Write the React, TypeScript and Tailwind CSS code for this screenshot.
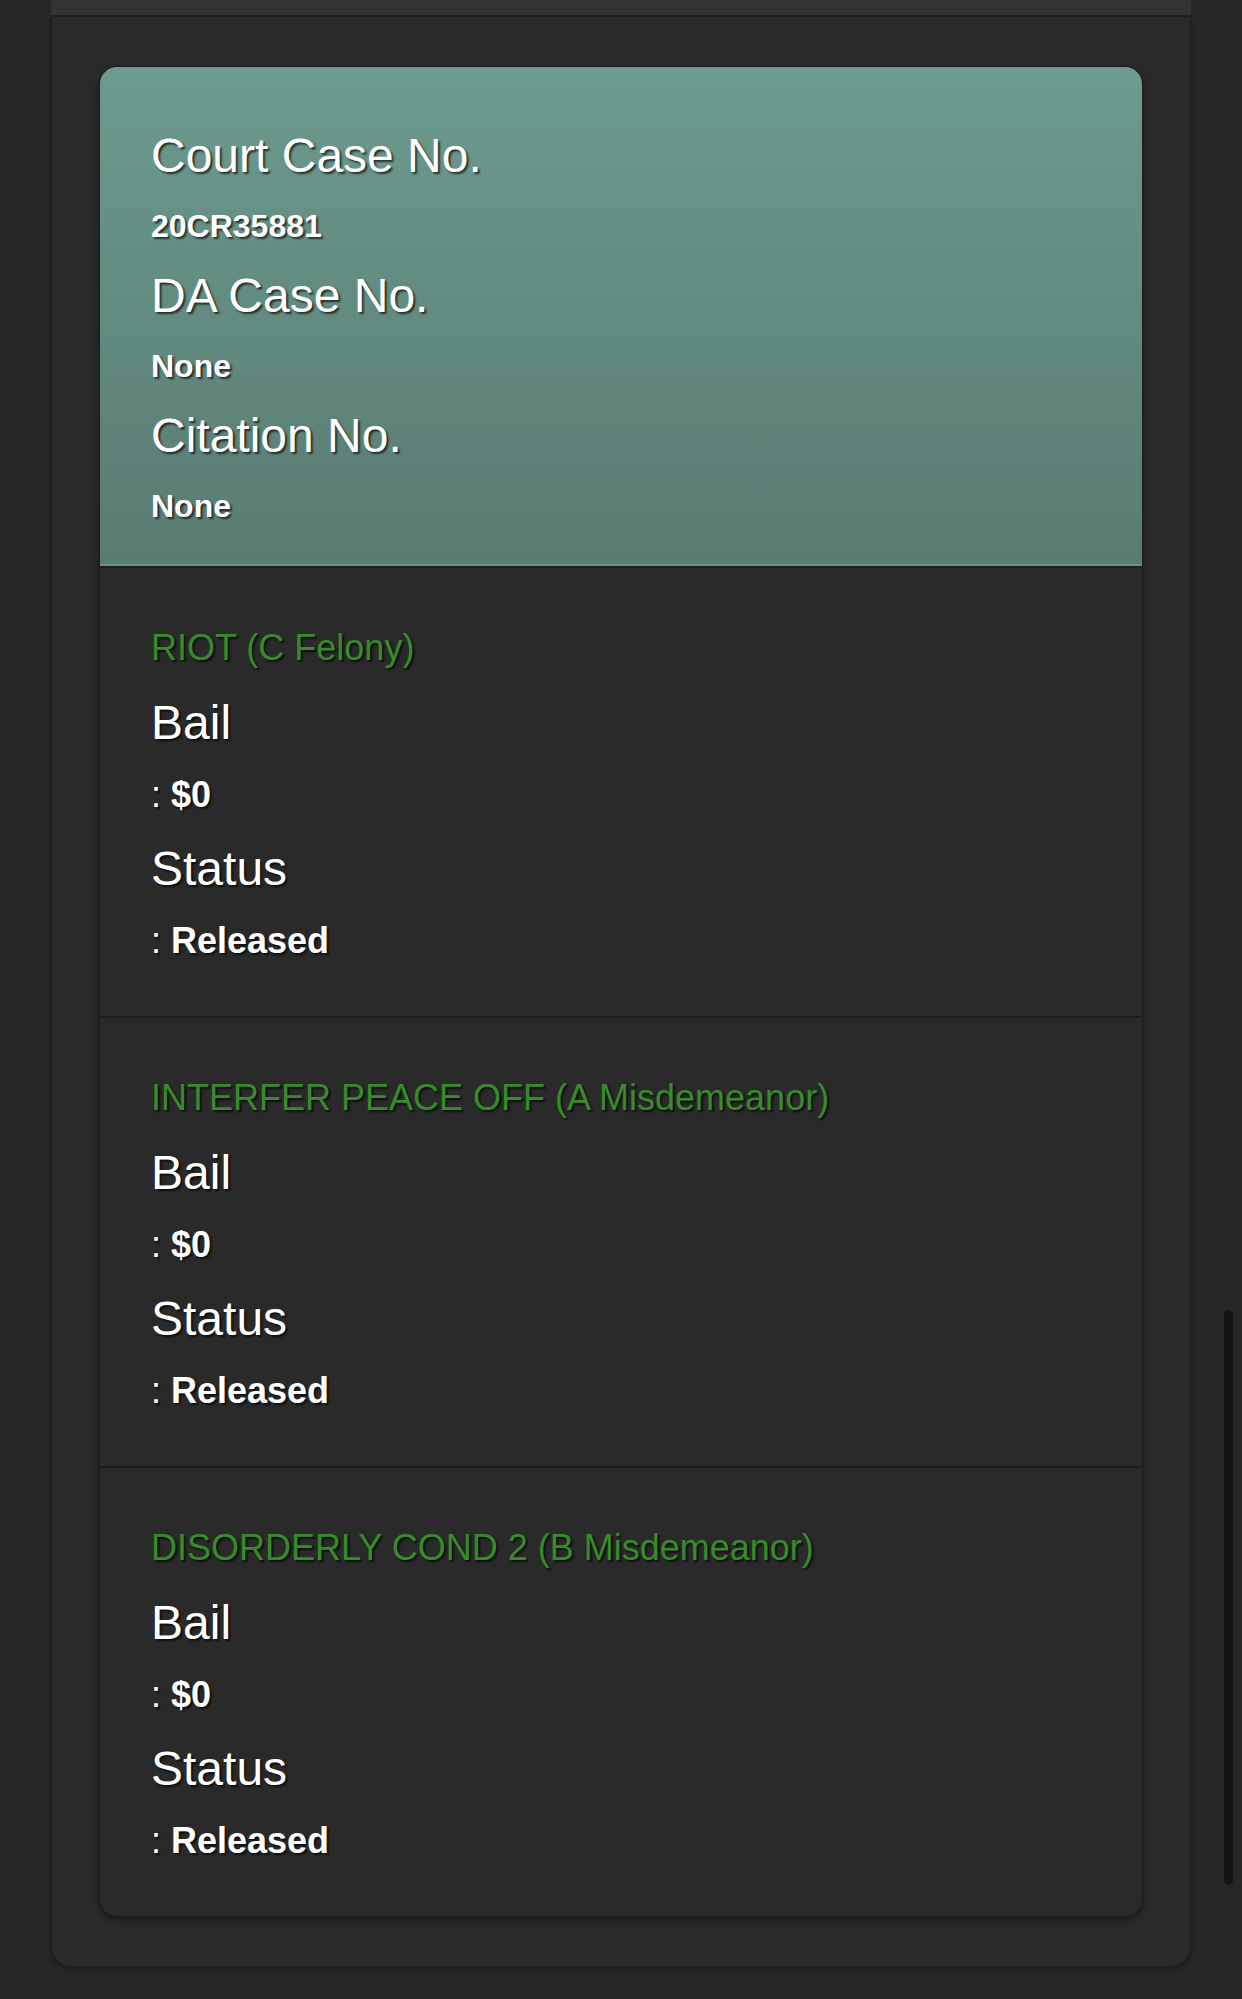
import React from 'react';

interface Charge {
  name: string;
  bail: string;
  status: string;
}

const charges: Charge[] = [
  { name: 'RIOT (C Felony)', bail: '$0', status: 'Released' },
  { name: 'INTERFER PEACE OFF (A Misdemeanor)', bail: '$0', status: 'Released' },
  { name: 'DISORDERLY COND 2 (B Misdemeanor)', bail: '$0', status: 'Released' },
];

const caseNumbers = [
  { label: 'Court Case No.', value: '20CR35881' },
  { label: 'DA Case No.', value: 'None' },
  { label: 'Citation No.', value: 'None' },
];

const shadow = '[text-shadow:2px_2px_2px_rgba(0,0,0,0.65)]';

const ChargeRow: React.FC<{ charge: Charge }> = ({ charge }) => (
  <div className="border-t-2 border-[#1d1d1d] px-[51px] pt-[59px] pb-[53px] flex flex-col">
    <p className={`text-[36px] leading-[42px] text-[#378b2b] ${shadow}`}>{charge.name}</p>
    <p className={`mt-[26px] text-[48px] leading-[56px] text-white ${shadow}`}>Bail</p>
    <p className={`mt-[22px] text-[36px] leading-[44px] text-white ${shadow}`}>
      : <span className="font-bold">{charge.bail}</span>
    </p>
    <p className={`mt-[24px] text-[48px] leading-[56px] text-white ${shadow}`}>Status</p>
    <p className={`mt-[22px] text-[36px] leading-[44px] text-white ${shadow}`}>
      : <span className="font-bold">{charge.status}</span>
    </p>
  </div>
);

export default function App() {
  return (
    <div
      className="relative w-[1242px] h-[1999px] overflow-hidden bg-[#262626]"
      style={{ fontFamily: '"Liberation Sans", Arial, Helvetica, sans-serif' }}
    >
      {/* tail of the previous panel */}
      <div className="mx-[51px] h-[17px] bg-[#333333] border-b-2 border-[#1f1f1f]" />

      <div className="mx-[51px] bg-[#2a2a2a] border-x border-b border-[#202020] rounded-b-[20px] px-[47px] pt-[49px] pb-[49px] shadow-[0_2px_4px_rgba(0,0,0,0.3)]">
        <div className="rounded-[18px] border border-[#1c1c1c] overflow-hidden bg-[#2a2a2a] shadow-[0_3px_6px_rgba(0,0,0,0.4)]">
          {/* case numbers */}
          <div className="bg-linear-to-b from-[#6d9b8f] to-[#597b72] border-b-2 border-[#6a8f85] px-[51px] pt-[61px] pb-[38px] flex flex-col gap-[22px]">
            {caseNumbers.map((c) => (
              <React.Fragment key={c.label}>
                <p className={`text-[48px] leading-[56px] text-white ${shadow}`}>{c.label}</p>
                <p className={`text-[32px] leading-[40px] font-bold text-white ${shadow}`}>{c.value}</p>
              </React.Fragment>
            ))}
          </div>

          {charges.map((ch) => (
            <ChargeRow key={ch.name} charge={ch} />
          ))}
        </div>
      </div>

      {/* scroll indicator */}
      <div className="absolute left-[1224px] top-[1310px] w-[9px] h-[575px] rounded-full bg-[#141414]" />
    </div>
  );
}
